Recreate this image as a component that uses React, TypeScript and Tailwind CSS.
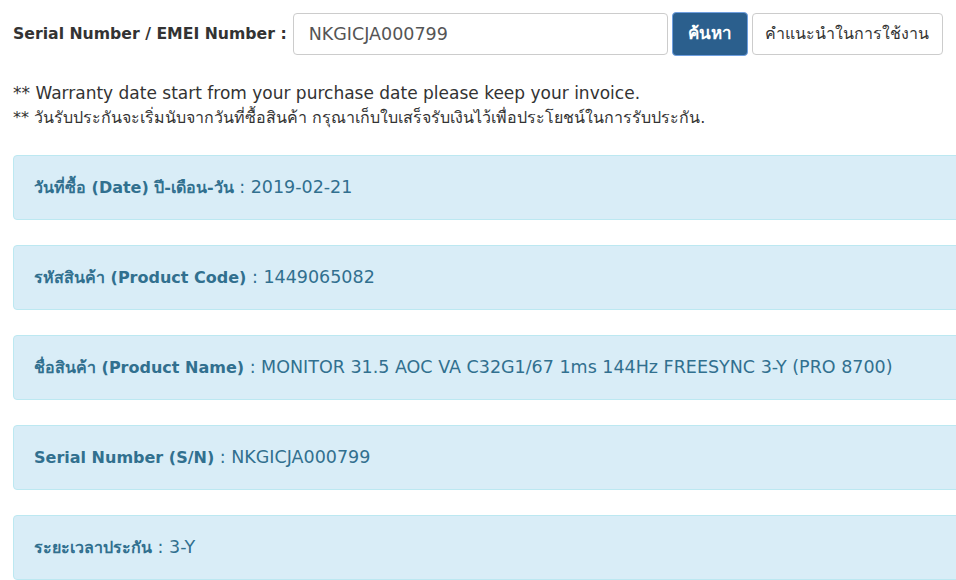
import { useState } from "react";

type Row = { label: string; value: string };

const rows: Row[] = [
  { label: "วันที่ซื้อ (Date) ปี-เดือน-วัน", value: "2019-02-21" },
  { label: "รหัสสินค้า (Product Code)", value: "1449065082" },
  {
    label: "ชื่อสินค้า (Product Name)",
    value: "MONITOR 31.5 AOC VA C32G1/67 1ms 144Hz FREESYNC 3-Y (PRO 8700)",
  },
  { label: "Serial Number (S/N)", value: "NKGICJA000799" },
  { label: "ระยะเวลาประกัน", value: "3-Y" },
];

const InfoRow = ({ label, value }: Row) => {
  return (
    <div className="flex items-center h-[65px] -mr-4 pl-5 bg-[#d9edf7] border border-[#bce8f1] rounded-l text-[#31708f]">
      <b className="font-bold text-[16px]">{label}</b>
      <span className="text-[17.5px]">&nbsp;: {value}</span>
    </div>
  );
};

export default function App() {
  const [serial, setSerial] = useState("NKGICJA000799");

  return (
    <div className="w-[956px] h-[580px] overflow-hidden bg-white font-['DejaVu_Sans',sans-serif] text-[#333]">
      <div className="pl-[13px] pt-3">
        {/* search bar */}
        <div className="flex items-center h-[44px]">
          <label className="font-bold text-[15.7px] mr-[6px]">
            Serial Number / EMEI Number :
          </label>
          <input
            value={serial}
            onChange={(e) => setSerial(e.target.value)}
            className="w-[375px] h-[42px] px-[15px] border border-[#ccc] rounded text-[17.5px] text-[#555] outline-none"
          />
          <button className="ml-1 w-[76px] h-[44px] rounded bg-[#2b5f8d] border border-[#6f9fdf] text-white text-[17px] font-semibold">
            ค้นหา
          </button>
          <button className="ml-1 w-[191px] h-[42px] rounded bg-white border border-[#ccc] text-[#333] text-[16px]">
            คำแนะนำในการใช้งาน
          </button>
        </div>

        <div className="mt-[25px] text-[17px] leading-[24px]">
          ** Warranty date start from your purchase date please keep your
          invoice.
        </div>
        <div className="text-[16px] leading-[26px]">
          ** วันรับประกันจะเริ่มนับจากวันที่ซื้อสินค้า
          กรุณาเก็บใบเสร็จรับเงินไว้เพื่อประโยชน์ในการรับประกัน.
        </div>

        {/* warranty details */}
        <div className="flex flex-col gap-[25px] mt-[24px]">
          {rows.map((r) => (
            <InfoRow key={r.label} label={r.label} value={r.value} />
          ))}
        </div>
      </div>
    </div>
  );
}
